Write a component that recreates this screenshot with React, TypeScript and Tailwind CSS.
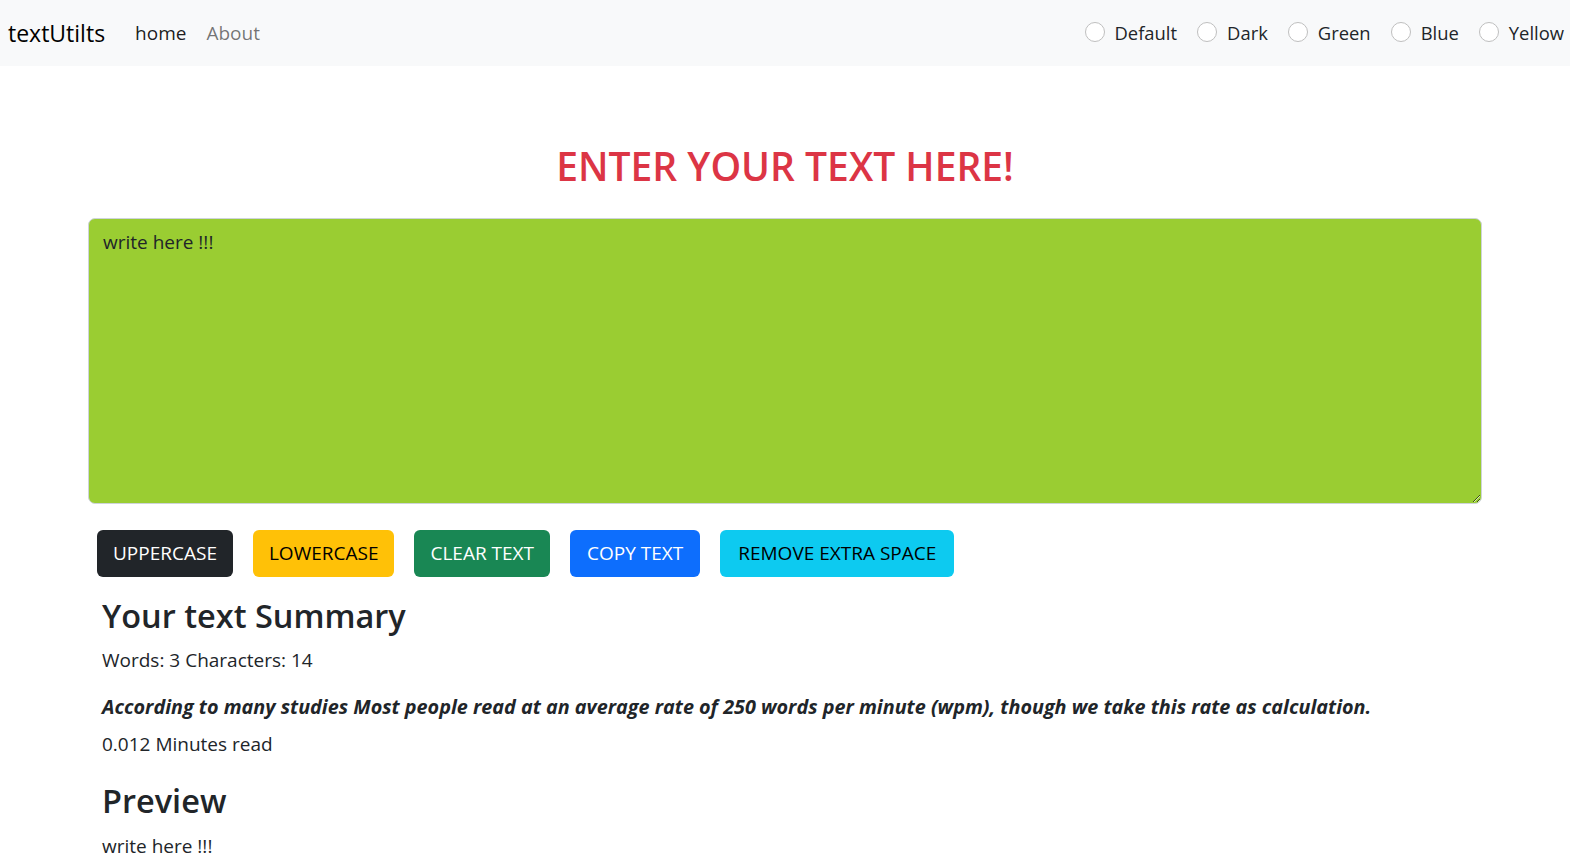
import { useState } from 'react'

const themes = ['Default', 'Dark', 'Green', 'Blue', 'Yellow']

export default function App() {
    const [text, setText] = useState('write here !!!')
    const [theme, setTheme] = useState('')
    const words = text.split(/\s+/).filter(w => w.length !== 0).length
    return (
        <div className="min-h-screen bg-white text-[#212529] font-['Open_Sans',sans-serif]">
            <nav className="h-[66px] bg-[#f8f9fa] flex items-center pl-[8px] pr-[6px]">
                <a className="text-[23px] text-black mr-[30px]" href="#">textUtilts</a>
                <div className="flex items-center gap-[20px] text-[19px]">
                    <a className="text-black/90" href="#">home</a>
                    <a className="text-black/55" href="#">About</a>
                </div>
                <div className="ml-auto flex items-center gap-[20px] text-[18.4px]">
                    {themes.map(t => (
                        <label key={t} className="flex items-center gap-[10px] cursor-pointer">
                            <input
                                type="radio"
                                name="theme"
                                checked={theme === t}
                                onChange={() => setTheme(t)}
                                className="appearance-none w-[20px] h-[20px] rounded-full border border-[#bfbfbf] bg-white -mt-[2px] checked:bg-[#0d6efd] checked:border-[#0d6efd]"
                            />
                            <span>{t}</span>
                        </label>
                    ))}
                </div>
            </nav>
            <main className="px-[88px]">
                <h1 className="text-center text-[#dc3545] text-[39px] font-semibold mt-[70px] mb-[22px] leading-[60px]">ENTER YOUR TEXT HERE!</h1>
                <textarea
                    value={text}
                    onChange={e => setText(e.target.value)}
                    className="block w-full h-[286px] bg-[#9acd32] border border-[#ced4da] rounded-[7px] px-[14px] py-[8px] text-[19px] leading-[30px] text-[#212529] outline-none"
                />
                <div className="flex gap-[20px] pl-[9px] mt-[26px]">
                    <button className="h-[47px] px-[16px] rounded-[6px] bg-[#212529] text-white text-[19px]">UPPERCASE</button>
                    <button className="h-[47px] px-[16px] rounded-[6px] bg-[#ffc107] text-black text-[19px]">LOWERCASE</button>
                    <button className="h-[47px] px-[16px] rounded-[6px] bg-[#198754] text-white text-[19px]">CLEAR TEXT</button>
                    <button className="h-[47px] px-[17px] rounded-[6px] bg-[#0d6efd] text-white text-[19px]">COPY TEXT</button>
                    <button className="h-[47px] px-[18px] rounded-[6px] bg-[#0dcaf0] text-black text-[19px]">REMOVE EXTRA SPACE</button>
                </div>
                <div className="pl-[14px] mt-[15px]">
                    <h2 className="text-[32.5px] font-semibold leading-[48px]">Your text Summary</h2>
                    <p className="text-[19px] leading-[30px] mt-[5px]">Words: {words} Characters: {text.length}</p>
                    <p className="text-[19.8px] leading-[30px] mt-[17px] italic font-bold">According to many studies Most people read at an average rate of 250 words per minute (wpm), though we take this rate as calculation.</p>
                    <p className="text-[19px] leading-[30px] mt-[7px]">{(0.004 * words).toFixed(3)} Minutes read</p>
                    <h2 className="text-[32.5px] font-semibold leading-[48px] mt-[18px]">Preview</h2>
                    <p className="text-[19px] leading-[30px] mt-[6px]">{text}</p>
                </div>
            </main>
        </div>
    )
}
